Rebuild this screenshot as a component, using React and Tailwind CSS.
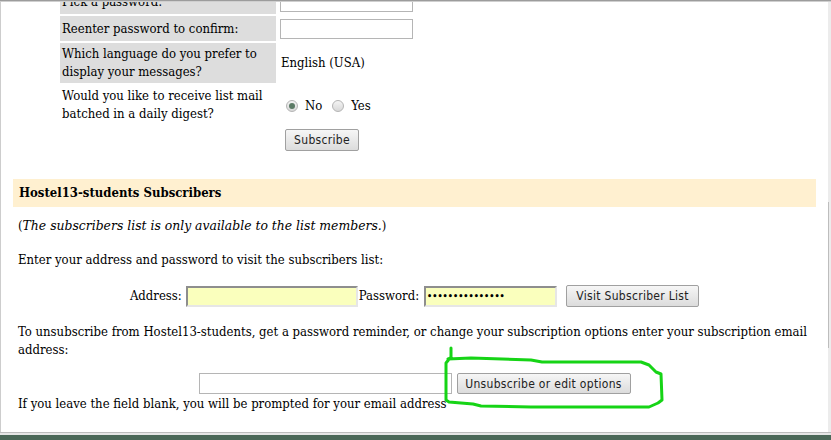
import React from 'react';

const serif = { fontFamily: '"DejaVu Serif Condensed", "DejaVu Serif", serif' };

function Btn({ children, className = '' }) {
  return (
    <button
      className={
        'border border-[#a0a0a0] rounded-[2px] bg-gradient-to-b from-[#f6f6f6] to-[#dcdcdc] text-[12px] text-[#222] font-["DejaVu_Sans",sans-serif] tracking-[0.3px] leading-none px-[7px] whitespace-nowrap ' +
        className
      }
    >
      {children}
    </button>
  );
}

function Radio({ checked }) {
  return (
    <span className="inline-flex items-center justify-center w-[12px] h-[12px] rounded-full border border-[#b4b4b4] bg-gradient-to-b from-[#f4f4f4] to-[#d8d8d8]">
      {checked && <span className="w-[6px] h-[6px] rounded-full bg-[#5b7a65]" />}
    </span>
  );
}

export default function App() {
  return (
    <div className="w-[831px] h-[440px] overflow-hidden bg-white flex flex-col text-black [font-stretch:condensed]" style={serif}>
      <div className="h-[1px] bg-[#9c9c9c]" />
      <div className="h-[1px] bg-[#cfcfcf]" />
      <div className="flex flex-1 min-h-0">
        <div className="w-[1px] bg-[#cdcdcd]" />
        <div className="relative flex-1 overflow-hidden text-[13px] leading-[18px]">
          {/* top form table */}
          <div className="grid grid-cols-[216px_auto] gap-[2px] ml-[59px] mt-[-13px]">
            <div className="bg-[#dddddd] h-[25px] px-[2px] flex items-center">Pick a password:</div>
            <div className="flex items-center pl-[2px]">
              <input className="w-[133px] h-[20px] border border-[#b5b5b5] bg-white" />
            </div>

            <div className="bg-[#dddddd] h-[25px] px-[2px] flex items-center">Reenter password to confirm:</div>
            <div className="flex items-center pl-[2px]">
              <input className="w-[133px] h-[20px] border border-[#b5b5b5] bg-white" />
            </div>

            <div className="bg-[#dddddd] h-[40px] px-[2px] flex items-center">
              <span>
                Which language do you prefer to
                <br />
                display your messages?
              </span>
            </div>
            <div className="flex items-center pl-[3px]">English (USA)</div>

            <div className="h-[40px] px-[2px] flex items-center">
              <span>
                Would you like to receive list mail
                <br />
                batched in a daily digest?
              </span>
            </div>
            <div className="flex items-center pl-[8px] pt-[2px]">
              <Radio checked />
              <span className="ml-[7px] mr-[10px]">No</span>
              <Radio />
              <span className="ml-[7px]">Yes</span>
            </div>

            <div className="h-[25px]" />
            <div className="flex items-center pl-[7px]">
              <Btn className="h-[22px] w-[74px]">Subscribe</Btn>
            </div>
          </div>

          {/* subscribers section */}
          <div className="mx-[12px] mt-[27px]">
            <div className="h-[28px] bg-[#fff0d0] pl-[6px] flex items-center font-bold">
              Hostel13-students Subscribers
            </div>
            <p className="mt-[9px] px-[5px]">
              (<i className="text-[13.8px]">The subscribers list is only available to the list members.</i>)
            </p>
            <p className="mt-[16px] px-[5px]">Enter your address and password to visit the subscribers list:</p>
            <div className="mt-[16px] flex justify-center items-center">
              <span className="mr-[4px]">Address:</span>
              <input className="w-[172px] h-[21px] bg-[#faffbd] border-2 border-t-[#8e8e8e] border-l-[#8e8e8e] border-b-[#e6e6e6] border-r-[#e6e6e6]" />
              <span className="ml-[1px] mr-[5px]">Password:</span>
              <input
                type="password"
                defaultValue="xxxxxxxxxxxxxxx"
                className="w-[133px] h-[21px] bg-[#faffbd] border-2 border-t-[#8e8e8e] border-l-[#8e8e8e] border-b-[#e6e6e6] border-r-[#e6e6e6] text-[9px] font-bold text-black px-[1px] font-['DejaVu_Sans',sans-serif]"
              />
              <Btn className="ml-[9px] h-[22px] w-[133px]">Visit Subscriber List</Btn>
            </div>
            <p className="mt-[16px] px-[5px]">
              To unsubscribe from Hostel13-students, get a password reminder, or change your subscription options enter your subscription email
              <br />
              address:
            </p>
            <div className="mt-[14px] flex justify-center items-center">
              <input className="w-[253px] h-[21px] border border-[#b5b5b5] bg-white" />
              <Btn className="ml-[5px] h-[21px] w-[174px]">Unsubscribe or edit options</Btn>
            </div>
            <p className="mt-[1px] px-[5px]">If you leave the field blank, you will be prompted for your email address</p>
          </div>

          {/* green hand-drawn annotation */}
          <svg className="absolute left-0 top-0 pointer-events-none" width="830" height="440">
            <path
              d="M450 347 L450 357 L447 358 L470 357 L530 359 L541 361 L640 361 L648 364 L655 371 L660 373 L661 399 L657 402 L648 406 L530 406 L480 405 L472 403 L448 401 L445 399 L445 362 L449 357"
              fill="none"
              stroke="#16d416"
              strokeWidth="3"
              strokeLinejoin="round"
              strokeLinecap="round"
              transform="translate(0 -1)"
            />
          </svg>
        </div>
        <div className="w-[3px] bg-[#ececec] flex flex-col">
          <div className="h-[200px]" />
          <div className="h-[146px] border-l border-[#bdbdbd]" />
        </div>
      </div>
      <div className="h-[1px] bg-[#bdbdbd]" />
      <div className="h-[2px] bg-[#e6e6e6]" />
      <div className="h-[5px] bg-[#4b6858]" />
    </div>
  );
}
